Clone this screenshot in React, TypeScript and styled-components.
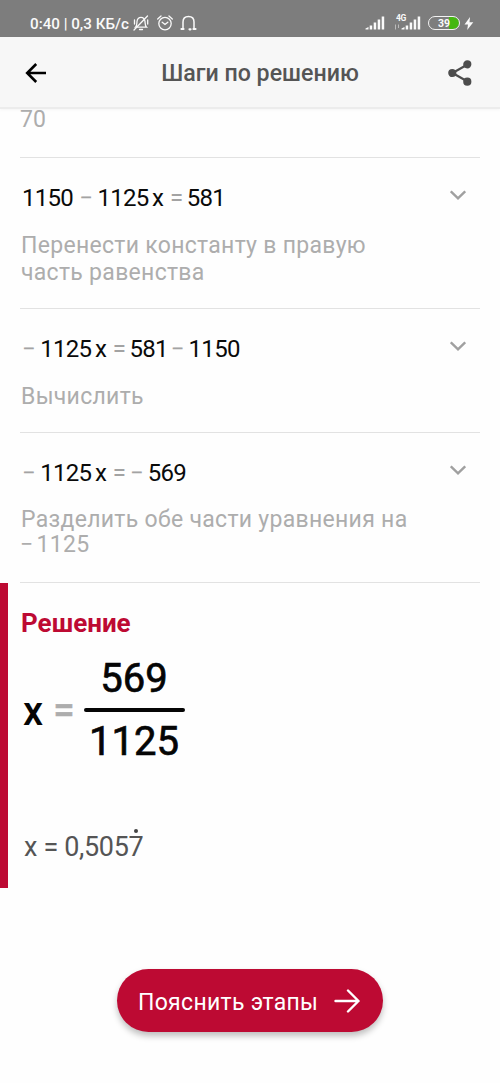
import React from "react"
import styled, { createGlobalStyle } from "styled-components"

const GlobalStyle = createGlobalStyle`
    * {
        box-sizing: border-box;
    }
    body {
        margin: 0;
        background-color: #fefefe;
        font-family: Roboto, "Noto Sans", sans-serif;
    }
    svg {
        display: block;
        flex: none;
    }
`

const Screen = styled.div`
    height: 1083px;
    width: 500px;
    display: flex;
    flex-direction: column;
    overflow: hidden;
`

const StatusBar = styled.div`
    height: 37px;
    flex: none;
    display: flex;
    justify-content: space-between;
    padding: 9px 26px 0 30px;
    background-color: #7d7d7d;
    color: #fafafa;
`

const StatusGroup = styled.div`
    height: 28px;
    display: flex;
    align-items: center;
`

const Clock = styled.div`
    width: 103px;
    padding-top: 1px;
    font-size: 15.2px;
    font-weight: 500;
    white-space: nowrap;
`

const StatusIcon = styled.div<{ gap: number }>`
    margin-right: ${p => p.gap}px;
`

const Header = styled.div`
    height: 72px;
    flex: none;
    display: flex;
    align-items: center;
    justify-content: space-between;
    padding: 1px 28px 0 25px;
    background-color: #f7f7f7;
    border-bottom: 2px solid #ececec;
    box-shadow: 0 1px 3px rgba(0, 0, 0, 0.04);
`

const Title = styled.div`
    margin-left: 25px;
    font-size: 23.2px;
    font-weight: 500;
    color: #555;
    white-space: nowrap;
`

const Steps = styled.div`
    flex: none;
    padding: 0 20px;
`

const StepRow = styled.div<{ height: number }>`
    height: ${p => p.height}px;
    border-bottom: 1px solid #e2e2e2;
    display: flex;
    justify-content: space-between;
    padding: 0 14px 0 1px;
`

const Scrolled = styled.div`
    height: 49px;
    border-bottom: 1px solid #e2e2e2;
    font-size: 23px;
    line-height: 22px;
    color: #adadad;
`

const StepBody = styled.div`
    padding-top: 26px;
`

const Equation = styled.div`
    display: flex;
    height: 28px;
    line-height: 28px;
    margin-left: 1px;
    font-size: 24px;
    letter-spacing: -0.7px;
    color: #0a0a0a;
    white-space: pre;
`

const Op = styled.span<{ before?: number, after?: number }>`
    color: #a3a3a3;
    letter-spacing: 0;
    margin-left: ${p => p.before ?? 0}px;
    margin-right: ${p => p.after ?? 0}px;
`

const Variable = styled.span`
    margin-left: 3.5px;
    letter-spacing: 0;
`

const Description = styled.div<{ leading?: number }>`
    margin-top: 20px;
    font-size: 23px;
    line-height: ${p => p.leading ?? 27}px;
    letter-spacing: 0.3px;
    color: #adadad;
    white-space: nowrap;
`

const Sign = styled.span`
    margin: 0 3px 0 -1px;
`

const Chevron = styled.div`
    padding-top: 32px;
`

const Solution = styled.div`
    height: 305px;
    flex: none;
    border-left: 8px solid #bd0a33;
    padding: 25px 0 0 13px;
`

const SolutionTitle = styled.div`
    font-size: 26px;
    line-height: 30px;
    font-weight: 700;
    color: #bd0a33;
`

const Result = styled.div`
    height: 112px;
    margin: 14px 0 0 2px;
    display: flex;
    font-size: 40px;
    font-weight: 500;
    color: #050505;
`

const ResultSide = styled.div`
    display: flex;
    align-items: center;
    height: 119px;
`

const Equals = styled.span`
    margin: 0 9px 3px 10px;
    color: #adadad;
    font-size: 38px;
    -webkit-text-stroke: 0.5px #adadad;
`

const Fraction = styled.div`
    width: 101px;
    height: 114px;
    display: flex;
    flex-direction: column;
    align-items: center;
    justify-content: space-between;
    padding-top: 3px;
    line-height: 48px;
    font-weight: 400;
    -webkit-text-stroke: 0.7px #050505;
`

const FractionLine = styled.div`
    width: 101px;
    height: 4px;
    border-radius: 2px;
    background-color: #050505;
    flex: none;
    margin-bottom: 1px;
`

const Decimal = styled.div`
    margin: 66px 0 0 3px;
    font-size: 27px;
    line-height: 34px;
    letter-spacing: -0.35px;
    color: #555;
    white-space: nowrap;
`

const Repeating = styled.span`
    position: relative;
    &::after {
        content: "";
        position: absolute;
        left: 6px;
        top: -2px;
        width: 4px;
        height: 4px;
        border-radius: 50%;
        background-color: #444;
    }
`

const ExplainButton = styled.button`
    width: 266px;
    height: 63px;
    flex: none;
    margin: 81px 0 0 117px;
    padding: 0 23px 0 21px;
    border: none;
    border-radius: 32px;
    display: flex;
    align-items: center;
    justify-content: space-between;
    background-color: #bd0a33;
    box-shadow: 0 4px 6px rgba(0, 0, 0, 0.25);
    color: #fff;
    font-family: inherit;
    font-size: 23px;
    letter-spacing: 0.3px;
    white-space: nowrap;
`

const ButtonLabel = styled.span`
    padding-top: 3px;
`

const MutedBell = () => (
    <svg width="16" height="16" viewBox="0 0 16 16" fill="none" stroke="currentColor" strokeWidth="1.3" strokeLinecap="round">
        <path d="M2.5 12.2C4 10.800 3.800 8.600 4 6.500C4.300 4 5.800 2.400 8 2.400S11.700 4 12 6.500C12.200 8.600 12 10.800 13.500 12.200Z" />
        <path d="M6.500 14.500H9.500M1 15L14.500 1M1.500 5V9M14.700 5V9" />
    </svg>
)

const Alarm = () => (
    <svg width="16" height="16" viewBox="0 0 16 16" fill="none" stroke="currentColor" strokeWidth="1.3" strokeLinecap="round">
        <circle cx="8" cy="8.600" r="6.200" />
        <path d="M5.200 7.200L8 9.500L10.800 7.200M0.700 4L4 1M15.300 4L12 1" />
    </svg>
)

const Headphones = () => (
    <svg width="17" height="16" viewBox="0 0 17 16" fill="none" stroke="currentColor" strokeWidth="1.500" strokeLinecap="round">
        <path d="M3 13.500V7C3 3.600 5.200 1.500 8.500 1.500S14 3.600 14 7V13.500" />
        <path d="M1.500 14H3.500M13.500 14H15.500M9.500 14.300H10.500" strokeWidth="2.200" />
    </svg>
)

const Signal = () => (
    <svg width="20" height="14" viewBox="0 0 20 14" fill="currentColor">
        <path d="M0.500 13.500V12.500L3.500 11V13.500ZM4.700 13.500V9.500H7.200V13.500ZM8.700 13.500V6.500H11.200V13.500ZM12.700 13.500V3.500H15.200V13.500ZM16.700 13.500V0.500H19.200V13.500Z" />
    </svg>
)

const Network = styled.div`
    position: relative;
    margin-right: 7px;
    padding-left: 5px;
`

const NetworkType = styled.span`
    position: absolute;
    left: 0;
    top: -2px;
    font-size: 8.5px;
    line-height: 8px;
    letter-spacing: -0.5px;
    font-weight: 700;
`

const DataArrows = styled.svg`
    position: absolute;
    left: -2px;
    top: 8px;
`

const Battery = styled.div`
    width: 32px;
    height: 14px;
    margin-right: 4px;
    border: 1.5px solid #f2f2f2;
    border-radius: 7px;
    background: linear-gradient(to right, transparent 66%, #45b711 66%);
    background-clip: padding-box;
    font-size: 10.5px;
    line-height: 13px;
    font-weight: 700;
    text-align: center;
`

const steps = [
    {
        height: 151,
        equation: <>1150<Op before={6} after={4.5}>−</Op>1125<Variable>x</Variable><Op before={6} after={3.5}>=</Op>581</>,
        description: <>Перенести константу в правую<br />часть равенства</>,
    },
    {
        height: 124,
        equation: <><Op after={4.5}>−</Op>1125<Variable>x</Variable><Op before={6} after={3.5}>=</Op>581<Op before={3} after={4}>−</Op>1150</>,
        description: <>Вычислить</>,
    },
    {
        height: 150,
        leading: 25,
        equation: <><Op after={4.5}>−</Op>1125<Variable>x</Variable><Op before={6} after={4}>=</Op><Op after={4}>−</Op>569</>,
        description: <>Разделить обе части уравнения на<br /><Sign>−</Sign>1125</>,
    },
]

const App = () => {
    return (
        <Screen>
            <GlobalStyle />
            <StatusBar>
                <StatusGroup>
                    <Clock>0:40 | 0,3 КБ/с</Clock>
                    <StatusIcon gap={8}><MutedBell /></StatusIcon>
                    <StatusIcon gap={7}><Alarm /></StatusIcon>
                    <StatusIcon gap={0}><Headphones /></StatusIcon>
                </StatusGroup>
                <StatusGroup>
                    <StatusIcon gap={11}><Signal /></StatusIcon>
                    <Network>
                        <NetworkType>4G</NetworkType>
                        <DataArrows width="6" height="6" viewBox="0 0 6 6" stroke="#bbb" fill="none">
                            <path d="M1.500 5.500V0.500M4.500 0.500V4" />
                        </DataArrows>
                        <Signal />
                    </Network>
                    <Battery>39</Battery>
                    <svg width="10" height="13" viewBox="0 0 10 13" fill="currentColor">
                        <path d="M6 0L0.500 7.500H4L3.200 13L9.300 5.300H5.500Z" />
                    </svg>
                </StatusGroup>
            </StatusBar>
            <Header>
                <svg width="22" height="20" viewBox="0 0 22 20" fill="none" stroke="#000" strokeWidth="2.600">
                    <path d="M21 10H2.500M11.200 1L2.200 10L11.200 19" />
                </svg>
                <Title>Шаги по решению</Title>
                <svg width="24" height="26" viewBox="0 0 24 26" fill="#4d4d4d" stroke="#4d4d4d" strokeWidth="2.2">
                    <path d="M19.500 4.500L4.500 13L19.500 21.500" fill="none" />
                    <circle cx="19.300" cy="4.300" r="3" />
                    <circle cx="4.300" cy="13" r="3" />
                    <circle cx="19.300" cy="21.700" r="3" />
                </svg>
            </Header>
            <Steps>
                <Scrolled>70</Scrolled>
                {steps.map((step, i) => (
                    <StepRow key={i} height={step.height}>
                        <StepBody>
                            <Equation>{step.equation}</Equation>
                            <Description leading={step.leading}>{step.description}</Description>
                        </StepBody>
                        <Chevron>
                            <svg width="16" height="11" viewBox="0 0 16 11" fill="none" stroke="#a0a0a0" strokeWidth="2.500">
                                <path d="M0.800 1.300L8 8.300L15.200 1.300" />
                            </svg>
                        </Chevron>
                    </StepRow>
                ))}
            </Steps>
            <Solution>
                <SolutionTitle>Решение</SolutionTitle>
                <Result>
                    <ResultSide>x<Equals>=</Equals></ResultSide>
                    <Fraction>
                        <div>569</div>
                        <FractionLine />
                        <div>1125</div>
                    </Fraction>
                </Result>
                <Decimal>x = 0,505<Repeating>7</Repeating></Decimal>
            </Solution>
            <ExplainButton>
                <ButtonLabel>Пояснить этапы</ButtonLabel>
                <svg width="26" height="24" viewBox="0 0 26 24" fill="none" stroke="currentColor" strokeWidth="2.400" strokeLinecap="round" strokeLinejoin="round">
                    <path d="M1.500 12H24.500M14 1.500L24.500 12L14 22.500" />
                </svg>
            </ExplainButton>
        </Screen>
    )
}

export default App
